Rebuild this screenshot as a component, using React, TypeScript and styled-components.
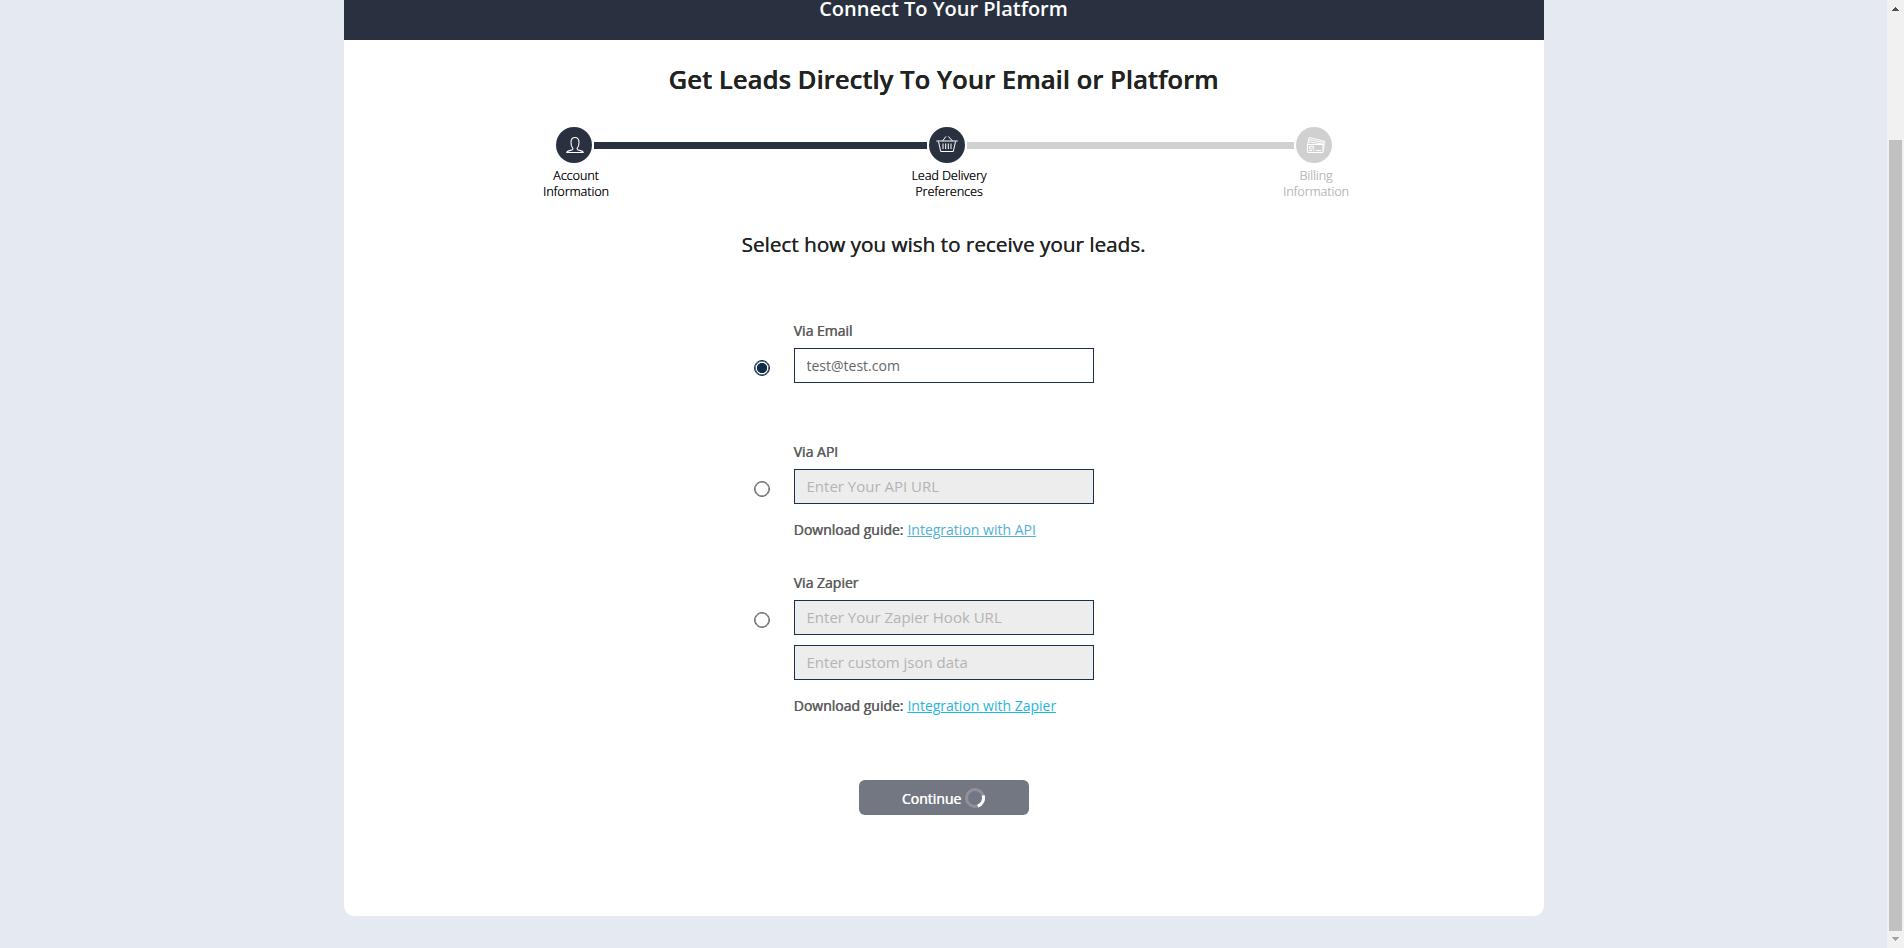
import React from "react";
import styled, { createGlobalStyle, css } from "styled-components";

const navy = "#293141";
const muted = "#d0d0d0";

const GlobalStyle = createGlobalStyle`
  * { box-sizing: border-box; }
  html, body { margin: 0; height: 100%; overflow: hidden; }
  body { font-family: "Open Sans", "Noto Sans", sans-serif; color: #212529; }
`;

const Page = styled.div`
  display: flex;
  height: 948px;
  background: #e4e9f2;
  overflow: hidden;
`;

const Content = styled.main`
  flex: 1;
  padding-left: 1px;
  display: flex;
  justify-content: center;
  align-items: flex-start;
`;

const Card = styled.section`
  width: 1200px;
  height: 916px;
  background: #fff;
  border-radius: 0 0 10px 10px;
  display: flex;
  flex-direction: column;
  align-items: center;
`;

const CardHeader = styled.header`
  flex: none;
  width: 100%;
  height: 40px;
  padding: 0 1px 22px 0;
  display: flex;
  align-items: center;
  justify-content: center;
  background: ${navy};
  color: #fff;
  font-size: 20px;
  line-height: 18px;
  font-weight: 600;
`;

const Title = styled.h1`
  margin: 22px 0 27px;
  padding-right: 1px;
  font-size: 25.7px;
  line-height: 36px;
  font-weight: 600;
  color: #212322;
  text-shadow: 0.3px 0 currentColor;
`;

const Stepper = styled.div`
  display: flex;
  align-items: flex-start;
  width: 780px;
  height: 75px;
`;

const Step = styled.div<{ $done: boolean }>`
  flex: none;
  width: 40px;
  display: flex;
  flex-direction: column;
  align-items: center;
  color: ${(p) => (p.$done ? navy : muted)};
`;

const StepDisc = styled.div`
  width: 36px;
  height: 36px;
  margin: 2px;
  border-radius: 50%;
  background: currentColor;
  display: flex;
  align-items: center;
  justify-content: center;
  svg { display: block; }
`;

const StepLabel = styled.div<{ $done: boolean }>`
  width: max-content;
  margin: 3px 0 0 4px;
  font-size: 12.5px;
  line-height: 16px;
  font-weight: 300;
  text-align: center;
  color: ${(p) => (p.$done ? "#000" : "#b8b8b8")};
  text-shadow: 0.2px 0 currentColor;
`;

const StepLine = styled.div<{ $done: boolean; $length: number }>`
  width: ${(p) => p.$length}px;
  height: 7px;
  margin-top: 17px;
  background: ${(p) => (p.$done ? navy : muted)};
`;

const Subtitle = styled.h2`
  margin: 30px 0 63px;
  padding-right: 1px;
  font-size: 20.7px;
  line-height: 28px;
  font-weight: 400;
  color: #212322;
  text-shadow: 0.3px 0 currentColor;
`;

const Form = styled.form`
  width: 380px;
  display: flex;
  flex-direction: column;
`;

const Option = styled.div<{ $after: number }>`
  display: flex;
  gap: 24px;
  margin-bottom: ${(p) => p.$after}px;
`;

const Radio = styled.span<{ $checked?: boolean }>`
  flex: none;
  width: 16px;
  height: 16px;
  margin-top: 39px;
  border-radius: 50%;
  border: 1px solid #666;
  box-shadow: inset 0 0 0 0.6px #666;
  ${(p) =>
    p.$checked &&
    css`
      border-color: #102a49;
      box-shadow: inset 0 0 0 0.6px #102a49;
      background: radial-gradient(circle, #102a49 0 4.8px, #fff 5.4px);
    `}
`;

const Fields = styled.div`
  width: 300px;
  display: flex;
  flex-direction: column;
`;

const Label = styled.label`
  margin: 0 0 8px -0.5px;
  font-size: 14px;
  line-height: 19px;
  color: #5c5c5c;
  text-shadow: 0.5px 0 currentColor;
`;

const TextField = styled.input`
  width: 300px;
  height: 35px;
  padding: 0 11.5px;
  border: 1px solid #1c2f4c;
  border-radius: 0;
  background: #fff;
  font: 14px "Open Sans", sans-serif;
  color: #666;
  & + & { margin-top: 10px; }
  &:disabled {
    padding-bottom: 2px;
    background: #ededed;
    font-size: 15px;
  }
  &::placeholder { color: #b4b4b4; opacity: 1; }
`;

const Guide = styled.div`
  margin: 16px 0 1px -0.5px;
  font-size: 14px;
  line-height: 19px;
  color: #5c5c5c;
  white-space: nowrap;
  text-shadow: 0.5px 0 currentColor;
`;

const GuideLink = styled.a<{ $tone: string }>`
  margin-left: 0.5px;
  color: ${(p) => p.$tone};
  text-decoration: underline;
  text-shadow: none;
`;

const Submit = styled.button`
  align-self: center;
  width: 170px;
  height: 35px;
  padding: 0;
  border: 0;
  border-radius: 6px;
  background: #737782;
  color: #fff;
  display: flex;
  align-items: center;
  justify-content: center;
  gap: 4px;
  font: 14px "Open Sans", sans-serif;
  text-shadow: 0.4px 0 currentColor;
`;

const SubmitText = styled.span`
  margin-left: -1px;
  padding-top: 2px;
`;

const Scrollbar = styled.aside`
  width: 17px;
  background: #f1f1f1;
  display: flex;
  flex-direction: column;
  align-items: center;
  svg { display: block; }
`;

const Thumb = styled.div`
  width: 13px;
  height: 791px;
  margin: 129px 0 6px;
  background: #c1c1c1;
`;

const UpArrow = styled.svg`
  margin-top: 7px;
`;

function PersonIcon() {
  return (
    <svg width="20" height="18" viewBox="-1.5 0 20 18" fill="none" stroke="#fff" strokeWidth="1.1">
      <path d="M7.3 12.2C6 11 5.5 9.3 5.5 6.5c0-3.5 1.5-5 4-5s4 1.5 4 5c0 2.8-.5 4.5-1.8 5.7v1c0 .8.8 1 2.3 1.2 2 .3 3.5.5 3.7 2.1H1.3c.2-1.6 1.7-1.8 3.7-2.1 1.5-.2 2.3-.4 2.3-1.2z" />
    </svg>
  );
}

function BasketIcon() {
  return (
    <svg width="22" height="18" viewBox="0 0 22 18" fill="none" stroke="#fff" strokeWidth="1">
      <path d="M.3 5h21.4M2.5 5.500 4.700 15.500h12.600L19.500 5.500M6.500 5 10 .4M16.500 5 12.300.4" />
      <path d="M7 7.500v5.500M9.700 7.500v5.500M12.300 7.500v5.500M15 7.500v5.500" />
    </svg>
  );
}

function CardsIcon() {
  return (
    <svg width="22" height="18" viewBox="0 0 22 18" fill="none" stroke="#fff" strokeWidth="1">
      <path d="M4.500 8.500h15.500v8H4.500zM6.500 10.300h4v2.400h-4zM6 14.500h3M10.200 14.500h1.300M13 14.500h5" />
      <path d="M4.800 8.300 5.300 5.800l15.900 2.500-.8 6M5.400 5.800l.3-2.200 15.700 3-.2 1.700M5.700 3.600l.5-2.100 15.300 3.700-.1 1.500" />
    </svg>
  );
}

function Spinner() {
  return (
    <svg width="20" height="20" viewBox="0 0 20 20" fill="none" strokeWidth="3">
      <circle cx="10" cy="10" r="8.5" stroke="#8f929c" />
      <path d="M18.1 7.4A8.5 8.5 0 0 1 12.7 18.1" stroke="#fff" />
    </svg>
  );
}

export default function App() {
  return (
    <Page>
      <GlobalStyle />
      <Content>
        <Card>
          <CardHeader>Connect To Your Platform</CardHeader>
          <Title>Get Leads Directly To Your Email or Platform</Title>
          <Stepper>
            <Step $done>
              <StepDisc><PersonIcon /></StepDisc>
              <StepLabel $done>Account<br />Information</StepLabel>
            </Step>
            <StepLine $done $length={333} />
            <Step $done>
              <StepDisc><BasketIcon /></StepDisc>
              <StepLabel $done>Lead Delivery<br />Preferences</StepLabel>
            </Step>
            <StepLine $done={false} $length={327} />
            <Step $done={false}>
              <StepDisc><CardsIcon /></StepDisc>
              <StepLabel $done={false}>Billing<br />Information</StepLabel>
            </Step>
          </Stepper>
          <Subtitle>Select how you wish to receive your leads.</Subtitle>
          <Form>
            <Option $after={59}>
              <Radio $checked />
              <Fields>
                <Label>Via Email</Label>
                <TextField defaultValue="test@test.com" />
              </Fields>
            </Option>
            <Option $after={33}>
              <Radio />
              <Fields>
                <Label>Via API</Label>
                <TextField disabled placeholder="Enter Your API URL" />
                <Guide>Download guide: <GuideLink $tone="#4fb0d3">Integration with API</GuideLink></Guide>
              </Fields>
            </Option>
            <Option $after={64}>
              <Radio />
              <Fields>
                <Label>Via Zapier</Label>
                <TextField disabled placeholder="Enter Your Zapier Hook URL" />
                <TextField disabled placeholder="Enter custom json data" />
                <Guide>Download guide: <GuideLink $tone="#1fb6dc">Integration with Zapier</GuideLink></Guide>
              </Fields>
            </Option>
            <Submit type="button"><SubmitText>Continue</SubmitText><Spinner /></Submit>
          </Form>
        </Card>
      </Content>
      <Scrollbar>
        <UpArrow width="7" height="4" shapeRendering="crispEdges" fill="#505050">
          <path d="M3 0h1v1h1v1h1v1h1v1H0V3h1V2h1V1h1z" />
        </UpArrow>
        <Thumb />
        <svg width="7" height="4" shapeRendering="crispEdges" fill="#a3a3a3">
          <path d="M0 0h7v1H6v1H5v1H4v1H3V3H2V2H1V1H0z" />
        </svg>
      </Scrollbar>
    </Page>
  );
}
